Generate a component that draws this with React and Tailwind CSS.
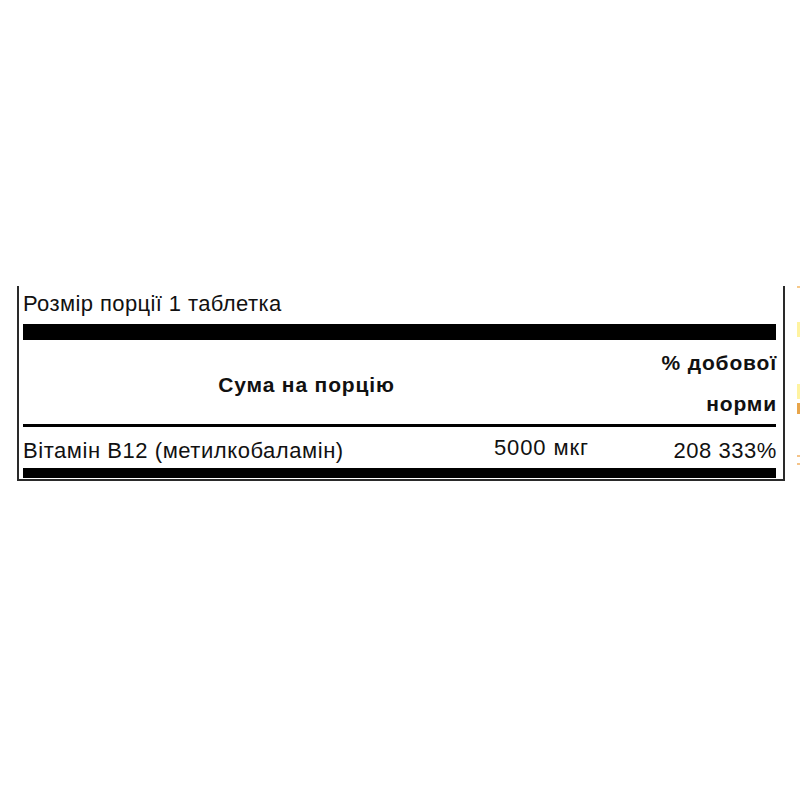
export default function App() {
  return (
    <div className="relative w-[800px] h-[800px] bg-white" style={{ fontFamily: '"Liberation Sans", Arial, sans-serif' }}>
      <div className="pt-[286px] pl-[17px]">
        <div className="w-[768px] border-l-2 border-r-2 border-b-2 border-[#2a2a2a] pl-[4px] pr-[7px] text-[#111] tracking-[0.4px]">
          <div className="h-[38px] flex items-center text-[22px] leading-none pb-[2px]">Розмір порції 1 таблетка</div>
          <div className="h-[16px] bg-black" />
          <div className="h-[84px] grid grid-cols-[567px_1fr] font-bold text-[21px] tracking-[0.85px]">
            <div className="flex items-center justify-center pt-[6px]">Сума на порцію</div>
            <div className="flex flex-col items-end">
              <div className="h-[42px] flex items-center pt-[4px] -mr-[1px]">% добової</div>
              <div className="h-[42px] flex items-center pt-[2px] -mr-[1px]">норми</div>
            </div>
          </div>
          <div className="h-[3px] bg-black" />
          <div className="h-[41px] grid grid-cols-[465px_101px_1fr] text-[22px] items-center leading-none tracking-[0.55px]">
            <div className="pt-[6px]">Вітамін В12 (метилкобаламін)</div>
            <div className="text-right whitespace-nowrap tracking-[0.9px]">5000 мкг</div>
            <div className="text-right pt-[6px] -mr-[1px]">208 333%</div>
          </div>
          <div className="h-[10px] bg-black mb-[1px]" />
        </div>
      </div>
      <div className="absolute left-[797px] top-[286px] w-[3px] h-[2px] bg-[#f7c98a]" />
      <div className="absolute left-[797px] top-[322px] w-[3px] h-[15px] bg-[#fff3a0]" />
      <div className="absolute left-[797px] top-[384px] w-[3px] h-[15px] bg-[#fff3a0]" />
      <div className="absolute left-[797px] top-[403px] w-[3px] h-[11px] bg-[#e8a54a]" />
      <div className="absolute left-[797px] top-[455px] w-[3px] h-[2px] bg-[#f5c48a]" />
      <div className="absolute left-[797px] top-[463px] w-[3px] h-[2px] bg-[#f5c48a]" />
    </div>
  );
}
